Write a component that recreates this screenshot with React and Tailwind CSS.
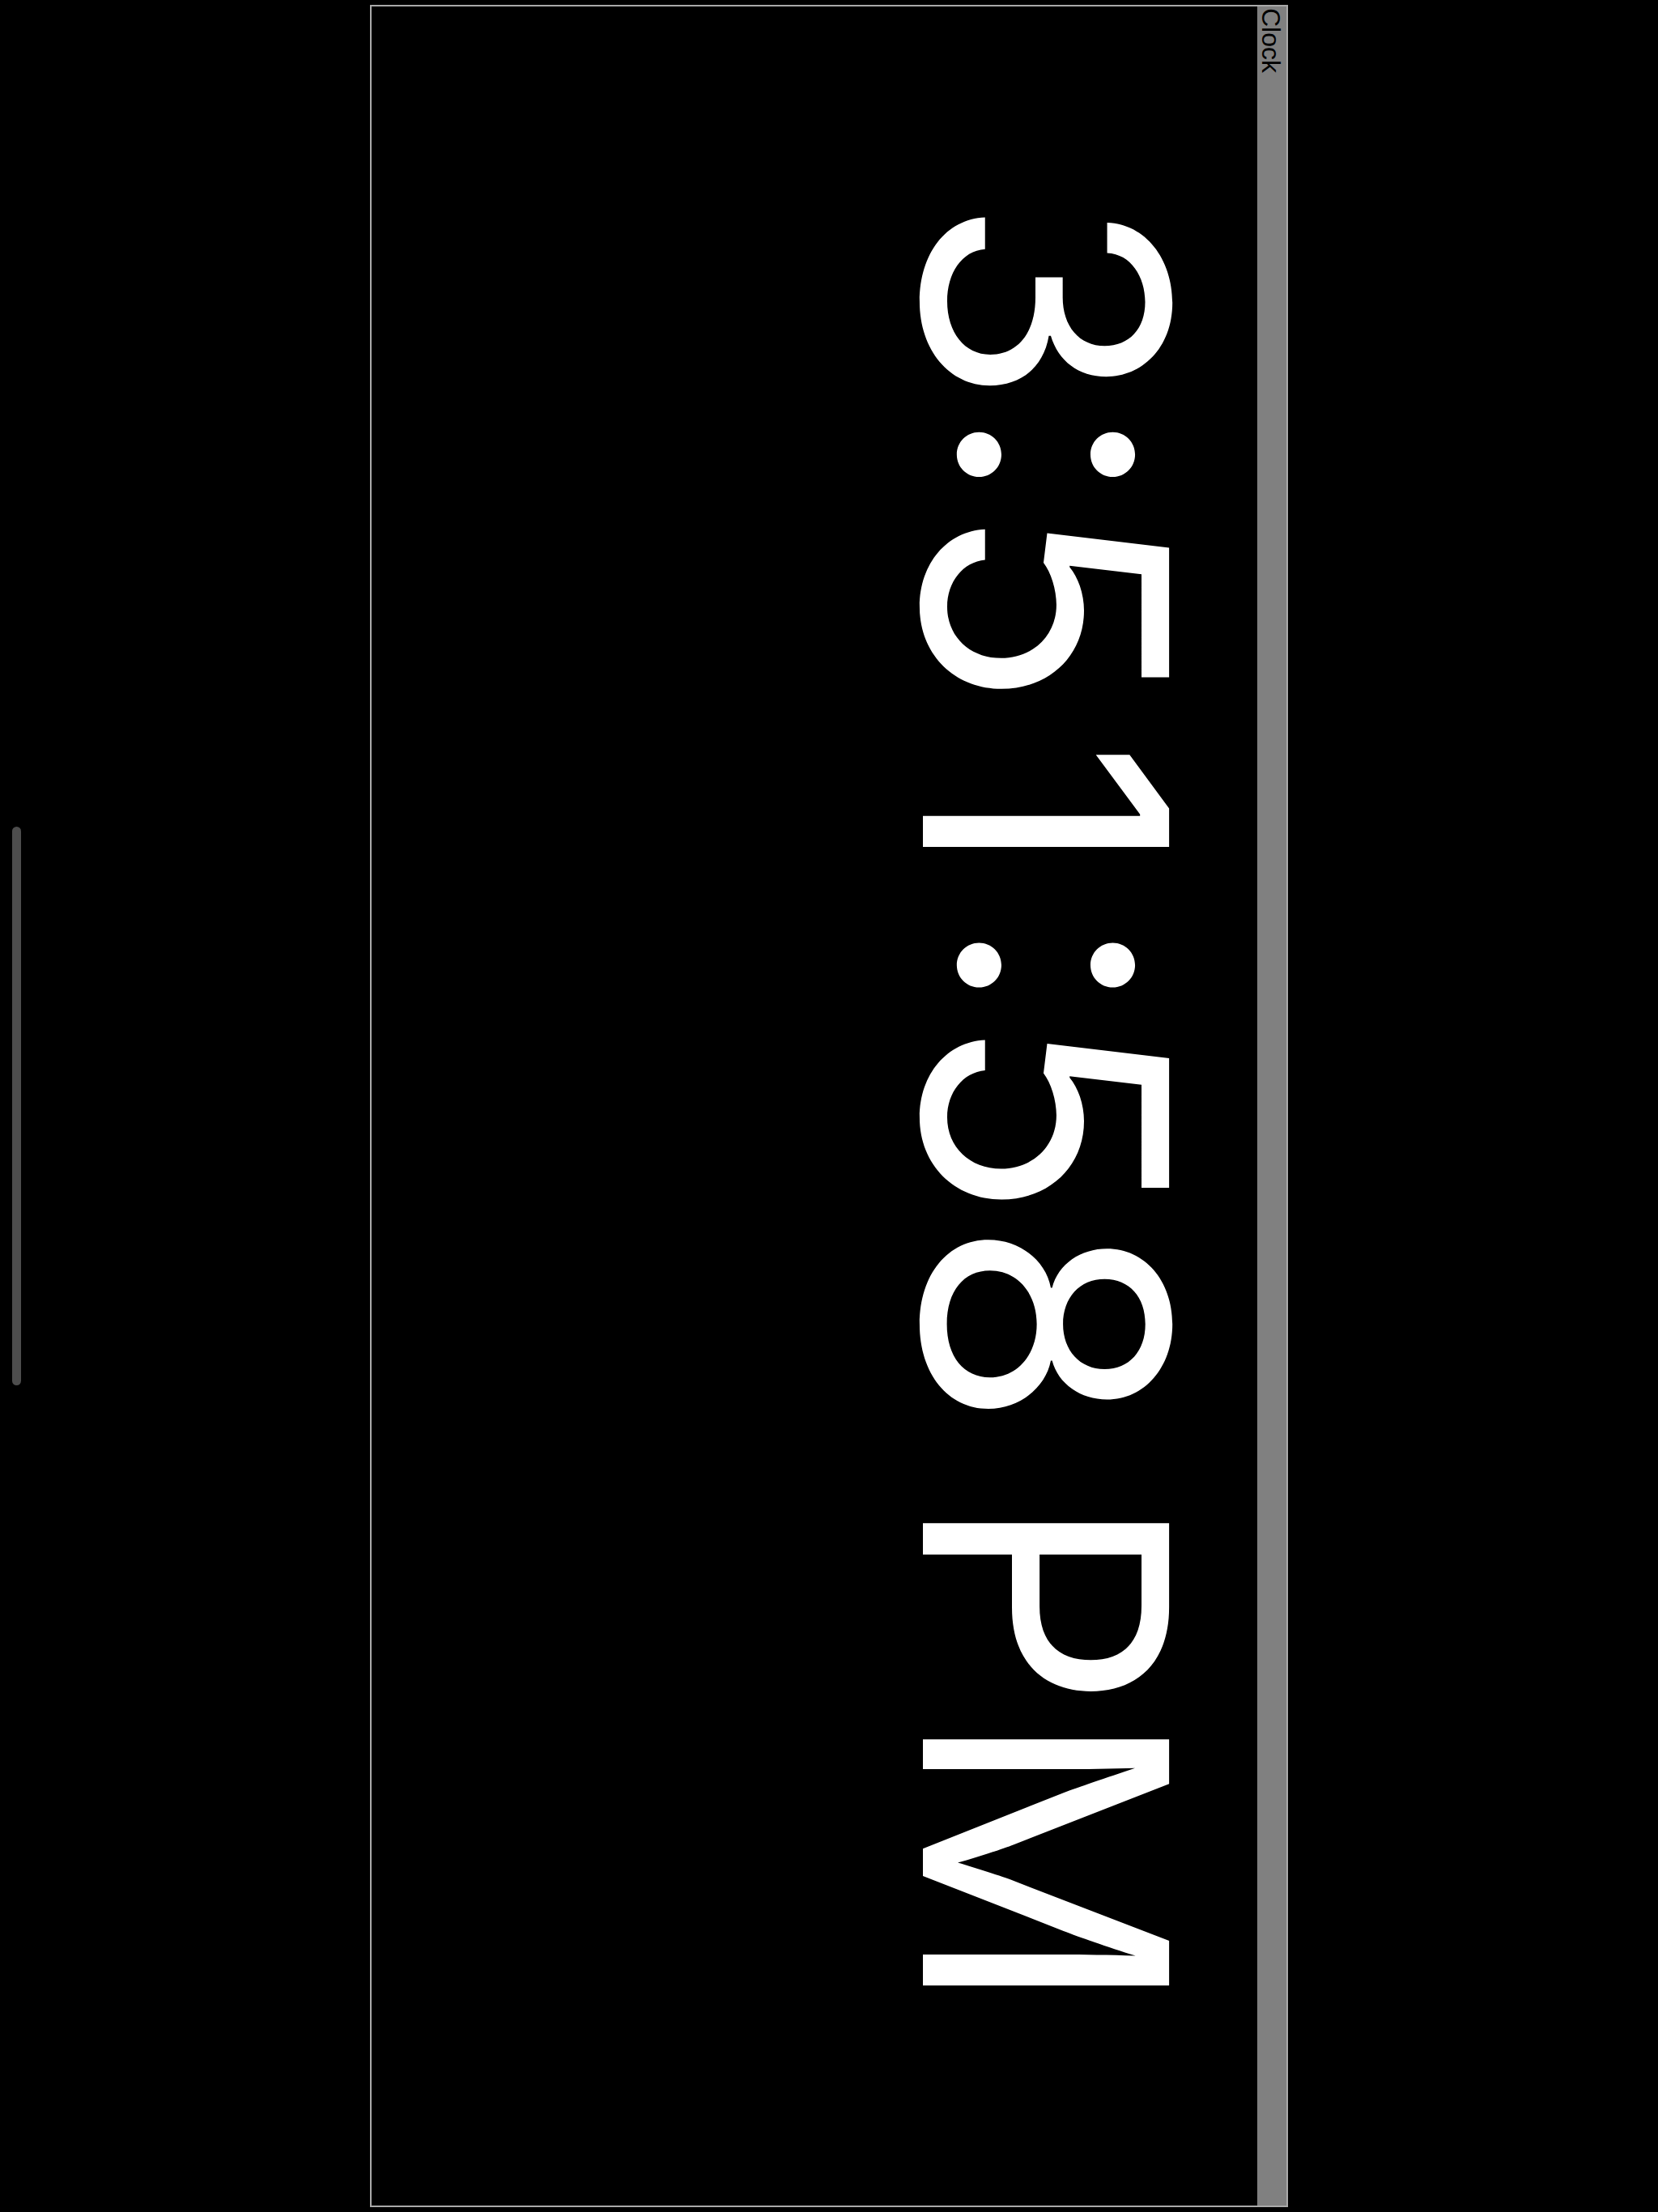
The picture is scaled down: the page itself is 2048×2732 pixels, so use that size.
export default function App() {
  return (
    <div className="flex min-h-screen items-start bg-black">
      {/* scroll thumb on the far left */}
      <div className="ml-[15px] mt-[1021px] h-[690px] w-[11px] shrink-0 rounded-full bg-[#4d4d4d]" />

      {/* window, turned a quarter clockwise */}
      <div className="relative ml-[431px] mt-[6px] h-[2720px] w-[1134px] shrink-0">
        <div className="flex h-[1134px] w-[2720px] origin-top-left flex-col border-2 border-[#a9a9a9] [transform:translateX(1134px)_rotate(90deg)]">
          <div className="relative z-10 h-[36px] shrink-0 overflow-hidden bg-[#808080] pl-[2px] pt-[1px] font-['Liberation_Sans',Arial,sans-serif] text-[32px] leading-[36px] text-black">
            Clock
          </div>
          <div className="flex-1 bg-black">
            <div className="-mt-[52px] text-center font-['Inter',sans-serif] text-[418px] leading-normal text-white [word-spacing:-38px]">
              3:5<span className="ml-[37px] mr-[49px]">1</span>:58 PM
            </div>
          </div>
        </div>
      </div>
    </div>
  );
}
